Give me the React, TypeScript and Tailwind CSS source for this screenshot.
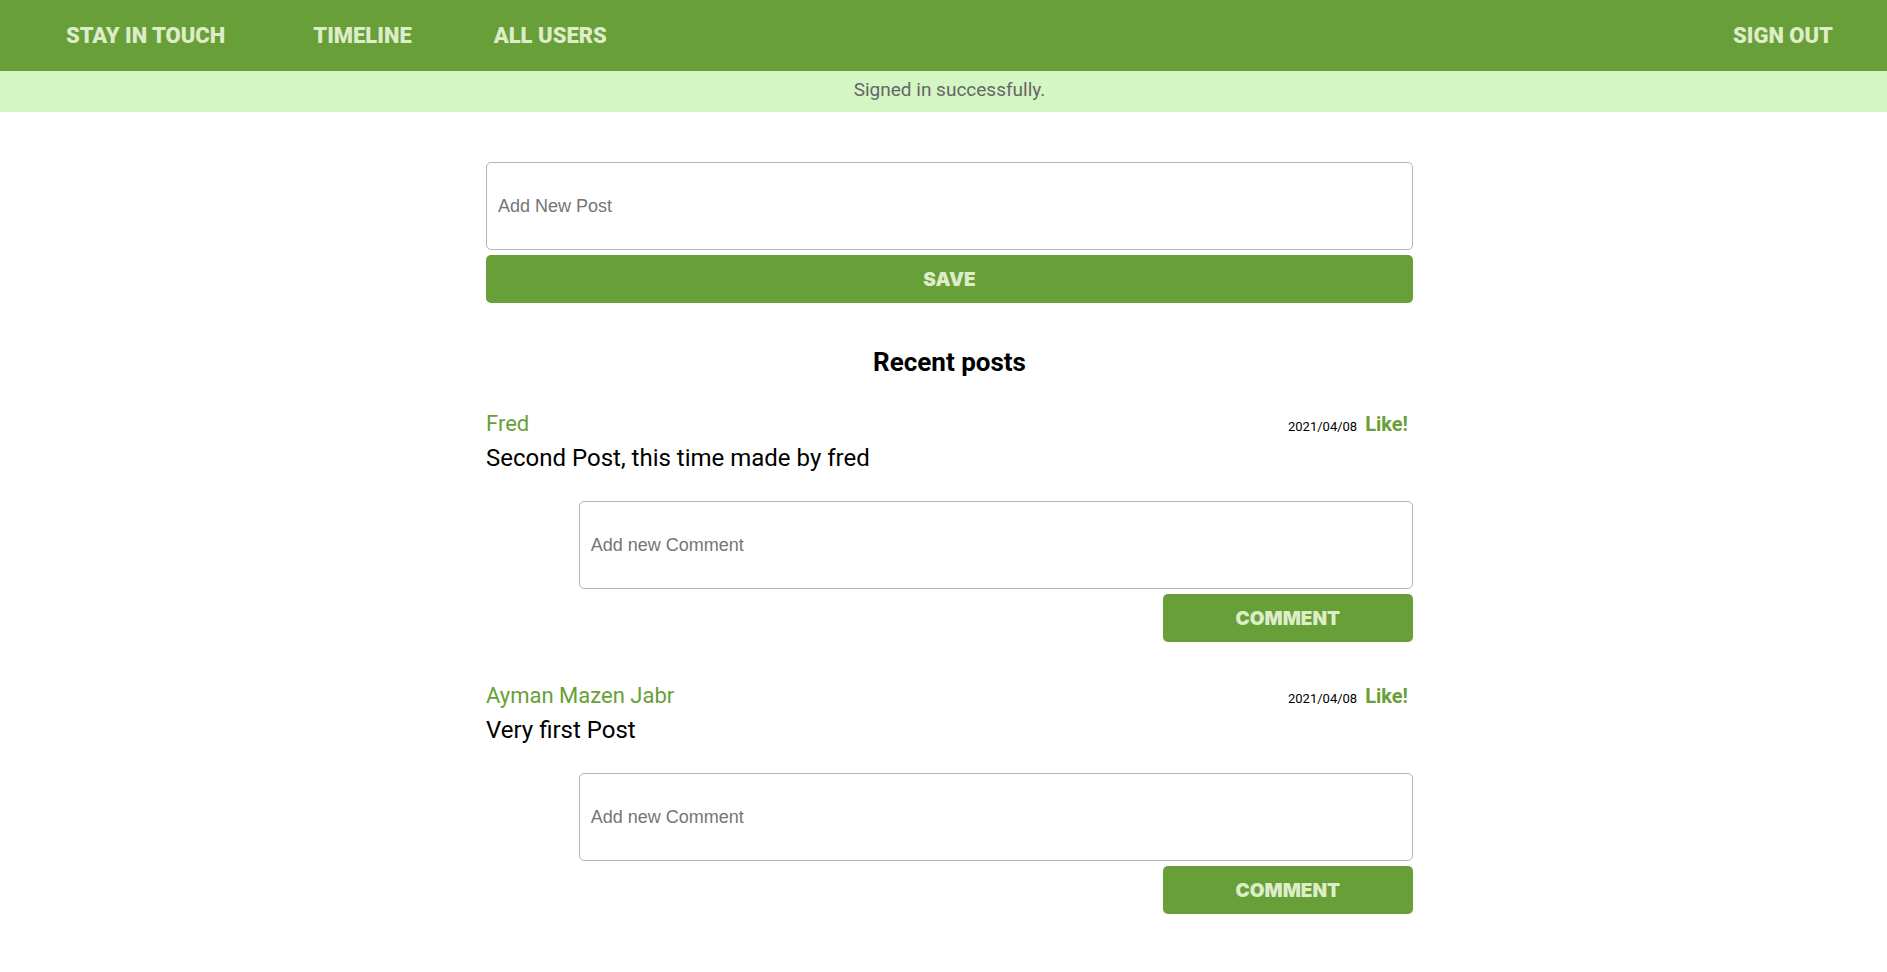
import React from "react";

const posts = [
  { id: 1, author: "Fred", date: "2021/04/08", text: "Second Post, this time made by fred" },
  { id: 2, author: "Ayman Mazen Jabr", date: "2021/04/08", text: "Very first Post" },
];

const field =
  "block h-[88px] w-full rounded-[5px] border border-[#b5b5b5] bg-white px-[11px] font-['Liberation_Sans',sans-serif] text-lg text-black placeholder:text-[#757575] placeholder:opacity-100";
const button =
  "block h-12 rounded-[5px] bg-[#689f38] pt-0.5 font-[Inter,sans-serif] text-[19px] font-black text-[#dcedc8]";

function Post({ id, author, date, text }: (typeof posts)[number]) {
  return (
    <li className="mb-[37px]">
      <div className="flex h-8 items-center justify-between">
        <a href="#" className="text-[22px] text-[#689f38]">{author}</a>
        <div className="flex items-baseline gap-2 pt-px pr-[5px]">
          <span className="text-[13px]">{date}</span>
          <a href="#" className="text-xl font-bold text-[#689f38]">Like!</a>
        </div>
      </div>
      <p className="mt-[3px] text-2xl leading-8">{text}</p>
      <form className="mt-[27px] ml-[10%] flex flex-col items-end gap-[5px]" onSubmit={(e) => e.preventDefault()}>
        <input id={`comment-${id}`} aria-label="Add new Comment" placeholder="Add new Comment" className={field} />
        <button className={`${button} w-[30%]`}>COMMENT</button>
      </form>
    </li>
  );
}

export default function App() {
  return (
    <div className="bg-white font-[Roboto,sans-serif] text-black">
      <nav className="flex h-[71px] items-center justify-between bg-[#689f38] pr-[54px] pl-[66px] text-[22px] font-black text-[#dcedc8]">
        <div className="flex items-center">
          <a href="#" className="mr-[88px]">STAY IN TOUCH</a>
          <a href="#" className="mr-[82px]">TIMELINE</a>
          <a href="#">ALL USERS</a>
        </div>
        <a href="#">SIGN OUT</a>
      </nav>
      <p className="flex h-[41px] items-center justify-center bg-[#d4f5c4] pb-0.5 pl-3 text-[19px] text-[#666]">
        Signed in successfully.
      </p>
      <div className="pl-3">
        <main className="mx-auto mt-[50px] max-w-[927px]">
          <form className="flex flex-col gap-[5px]" onSubmit={(e) => e.preventDefault()}>
            <input aria-label="Add New Post" placeholder="Add New Post" className={field} />
            <button className={button}>SAVE</button>
          </form>
          <h1 className="mt-[43px] mb-[29px] text-center text-[26px] leading-8 font-bold">Recent posts</h1>
          <ul>
            {posts.map((p) => <Post key={p.id} {...p} />)}
          </ul>
        </main>
      </div>
    </div>
  );
}
